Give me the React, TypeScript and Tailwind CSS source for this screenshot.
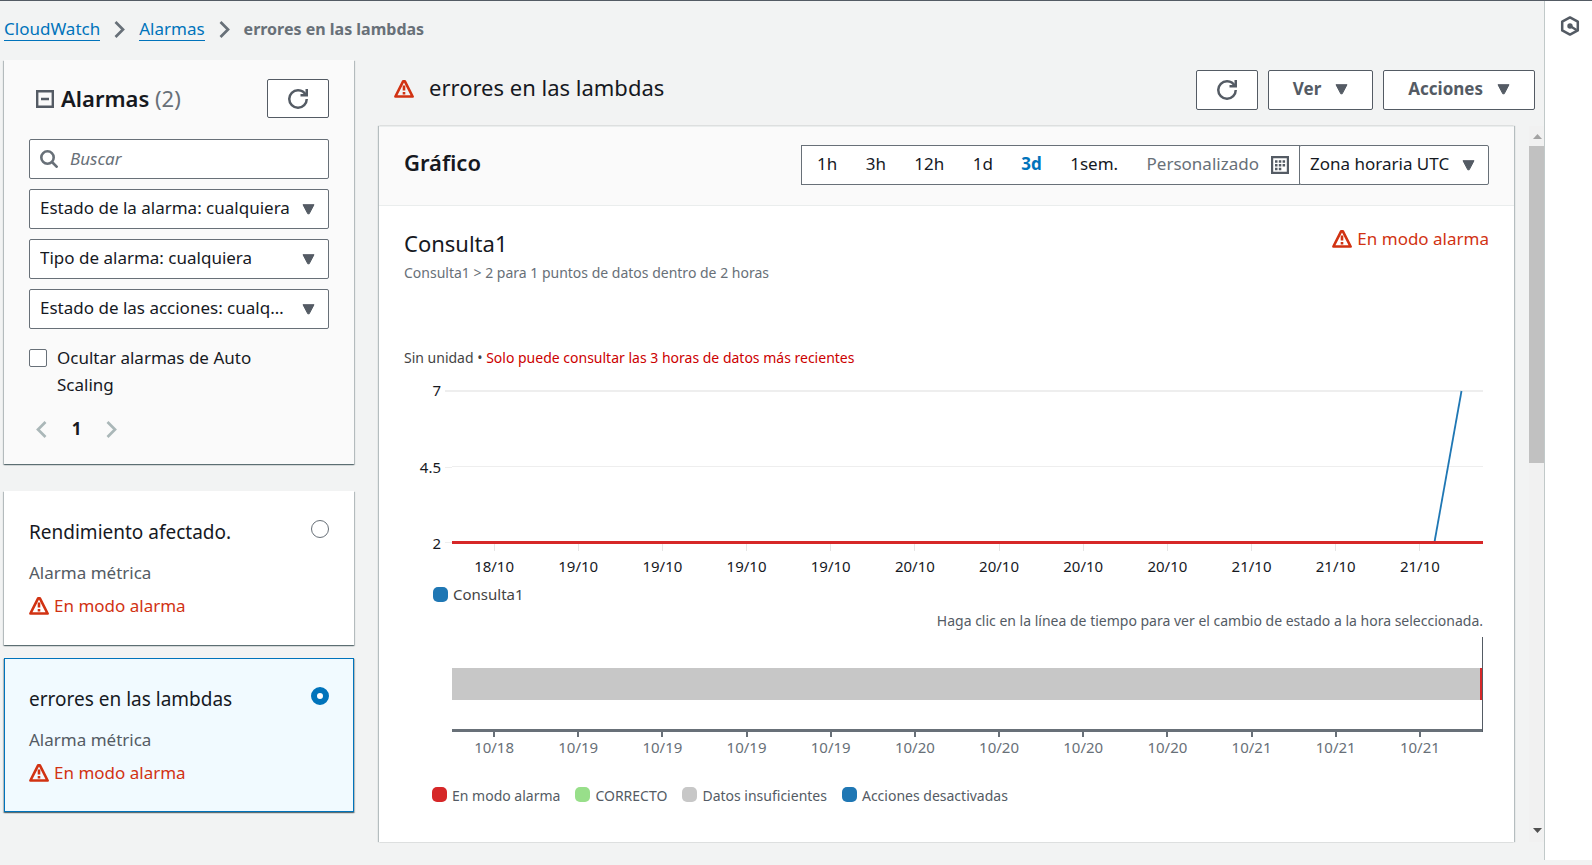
import { useState } from "react";
import type { ReactNode } from "react";

const RANGES = ["1h", "3h", "12h", "1d", "3d", "1sem."];
const CHART_DATES = ["18/10", "19/10", "19/10", "19/10", "19/10", "20/10", "20/10", "20/10", "20/10", "21/10", "21/10", "21/10"];
const TIMELINE_DATES = ["10/18", "10/19", "10/19", "10/19", "10/19", "10/20", "10/20", "10/20", "10/20", "10/21", "10/21", "10/21"];
const ALARMS = ["Rendimiento afectado.", "errores en las lambdas"];
const STATES = [
  { label: "En modo alarma", color: "bg-[#d62728]" },
  { label: "CORRECTO", color: "bg-[#98df8a]" },
  { label: "Datos insuficientes", color: "bg-[#c7c7c7]" },
  { label: "Acciones desactivadas", color: "bg-[#1f77b4]" },
];

function RefreshIcon() {
  return (
    <svg viewBox="0 0 16 16" className="size-5" fill="none" stroke="currentColor" strokeWidth="2" aria-hidden="true">
      <path d="M10 5h5V0" />
      <path d="M15 8a6.96 6.96 0 0 1-7 7 6.96 6.96 0 0 1-7-7 6.96 6.96 0 0 1 7-7 6.87 6.87 0 0 1 6.3 4" />
    </svg>
  );
}

function WarningIcon() {
  return (
    <svg viewBox="0 0 20 20" className="size-5 shrink-0" fill="none" stroke="currentColor" strokeWidth="2.600" aria-hidden="true">
      <path d="M9.100 2.300h1.800l7.700 15.200H1.400Z" strokeLinejoin="round" />
      <path d="M10 6.500v5M10 13v2.500" />
    </svg>
  );
}

function Caret({ className = "" }: { className?: string }) {
  return (
    <svg viewBox="0 0 13 11" className={`h-[11px] w-[13px] shrink-0 ${className}`} aria-hidden="true">
      <path d="M1 .7h11L7.200 9.800H5.800Z" fill="#545b64" stroke="#545b64" strokeLinejoin="round" />
    </svg>
  );
}

function Chevron({ left = false, className = "" }: { left?: boolean; className?: string }) {
  return (
    <svg viewBox="0 0 11 17" className={`h-[17px] w-[11px] ${className}`} fill="none" stroke="currentColor" strokeWidth="2.700" aria-hidden="true">
      <path d={left ? "M9.500 1 2 8.500l7.500 7.500" : "M1.500 1 9 8.500 1.500 16"} />
    </svg>
  );
}

function Button({ children, label, className = "" }: { children: ReactNode; label?: string; className?: string }) {
  return (
    <button
      type="button"
      aria-label={label}
      className={`flex items-center justify-center rounded-[2px] border border-[#545b64] bg-white font-bold text-[#545b64] ${className}`}
    >
      {children}
    </button>
  );
}

function Select({ text, label, className = "" }: { text: string; label: string; className?: string }) {
  return (
    <div className={`relative ${className}`}>
      <select
        aria-label={label}
        className="block h-10 w-full appearance-none truncate rounded-[2px] border border-[#687078] bg-white pr-[38px] pb-[2px] pl-[10px] text-[#16191f]"
      >
        <option>{text}</option>
      </select>
      <Caret className="pointer-events-none absolute top-[15px] right-[14px]" />
    </div>
  );
}

function AlarmState() {
  return (
    <span className="flex items-center gap-[5px] leading-6 text-[#d13212]">
      <WarningIcon />
      En modo alarma
    </span>
  );
}

function Sidebar() {
  const [selected, setSelected] = useState(1);
  return (
    <aside className="flex w-[350px] shrink-0 flex-col">
      <section className="bg-[#fafafa] px-[25px] pt-[19px] pb-[21px] shadow-[0_1px_1px_0_rgba(0,28,36,0.4),1px_1px_1px_0_rgba(0,28,36,0.2),-1px_1px_1px_0_rgba(0,28,36,0.2)]">
        <div className="flex h-[39px] items-center">
          <svg viewBox="0 0 18 18" className="mr-[7px] ml-[7px] size-[18px]" fill="none" stroke="#545b64" strokeWidth="2.400" aria-hidden="true">
            <path d="M1.200 1.200h15.600v15.600H1.200ZM5 9h8" />
          </svg>
          <h2 className="text-[22px] font-semibold text-[#16191f]">
            Alarmas <span className="font-normal text-[#687078]">(2)</span>
          </h2>
          <Button label="Actualizar alarmas" className="ml-auto h-[39px] w-[62px]">
            <RefreshIcon />
          </Button>
        </div>
        <div className="mt-[21px] flex flex-col gap-[10px]">
          <div className="relative">
            <svg viewBox="0 0 18 18" className="absolute top-[11px] left-[11px] size-[18px]" fill="none" stroke="#687078" strokeWidth="2.600" aria-hidden="true">
              <circle cx="7.500" cy="7.500" r="6.200" />
              <path d="m12 12 5.500 5.500" />
            </svg>
            <input
              type="search"
              aria-label="Buscar"
              placeholder="Buscar"
              className="block h-10 w-full rounded-[2px] border border-[#687078] bg-white pr-3 pb-[2px] pl-10 placeholder:text-[#687078] placeholder:italic"
            />
          </div>
          <Select label="Estado de la alarma" text="Estado de la alarma: cualquiera" />
          <Select label="Tipo de alarma" text="Tipo de alarma: cualquiera" />
          <Select label="Estado de las acciones" text="Estado de las acciones: cualquiera" />
        </div>
        <label className="mt-[15px] flex items-start gap-[10px] leading-[27px]">
          <input
            type="checkbox"
            className="mt-[5px] size-[18px] shrink-0 appearance-none rounded-[2px] border border-[#687078] bg-white checked:bg-[#0073bb]"
          />
          <span className="w-[220px]">Ocultar alarmas de Auto Scaling</span>
        </label>
        <nav aria-label="Paginación" className="mt-[17px] flex h-[28px] items-center pl-[7px]">
          <button type="button" aria-label="Página anterior" className="text-[#aab7b8]">
            <Chevron left />
          </button>
          <span className="w-[59px] text-center font-bold">1</span>
          <button type="button" aria-label="Página siguiente" className="text-[#aab7b8]">
            <Chevron />
          </button>
        </nav>
      </section>
      <div className="mt-[27px] flex flex-col gap-[13px]">
        {ALARMS.map((name, i) => (
          <label
            key={name}
            className={`flex min-h-[154px] justify-between border px-6 pt-6 shadow-[0_1px_1px_0_rgba(0,28,36,0.4),1px_1px_1px_0_rgba(0,28,36,0.2),-1px_1px_1px_0_rgba(0,28,36,0.2)] ${
              selected === i ? "border-[#0073bb] bg-[#f1faff]" : "border-white bg-white"
            }`}
          >
            <span className="flex flex-col">
              <span className="text-[19px] leading-8">{name}</span>
              <span className="mt-[13px] leading-6 text-[#545b64]">Alarma métrica</span>
              <span className="mt-[9px]">
                <AlarmState />
              </span>
            </span>
            <input
              type="radio"
              name="alarm"
              checked={selected === i}
              onChange={() => setSelected(i)}
              className="mt-[4px] size-[18px] appearance-none rounded-full border border-[#687078] bg-white checked:border-[6px] checked:border-[#0073bb]"
            />
          </label>
        ))}
      </div>
    </aside>
  );
}

function MetricChart() {
  return (
    <div className="mt-[22px]">
      <div className="flex">
        <div className="-my-[10px] flex w-[37px] flex-col justify-between text-right text-[15px] leading-5 text-[#16191f]">
          <span>7</span>
          <span>4.5</span>
          <span>2</span>
        </div>
        <div className="ml-1 flex h-[153px] min-w-0 flex-1">
          <div className="flex w-[7px] shrink-0 flex-col justify-between">
            <i className="h-[2px] bg-[#eee]" />
            <i className="h-px bg-[#eee]" />
            <i className="h-px bg-[#eee]" />
          </div>
          <svg viewBox="0 0 1031 153" preserveAspectRatio="none" className="h-[153px] min-w-0 flex-1 overflow-visible" role="img" aria-label="Consulta1">
            <path d="M0 1h1031" stroke="#eee" strokeWidth="2" />
            <path d="M0 76.500h1031" stroke="#eee" />
            <path d="m982.500 152 27-151" stroke="#1f77b4" strokeWidth="1.800" fill="none" />
            <path d="M0 152.500h1031" stroke="#d62728" strokeWidth="3" />
          </svg>
        </div>
      </div>
      <div className="mr-[21px] ml-12 grid grid-cols-12">
        {CHART_DATES.map((date, i) => (
          <div key={i} className="flex flex-col items-center text-[15px] leading-5 text-[#16191f]">
            <i className="mt-px mb-[5px] h-[7px] w-px bg-[#e5e5e5]" />
            {date}
          </div>
        ))}
      </div>
      <div className="mt-[8px] ml-[29px] flex items-center gap-[5px] text-[15px] leading-5 text-[#444]">
        <i className="size-[15px] rounded-[5px] bg-[#1f77b4]" />
        Consulta1
      </div>
    </div>
  );
}

function StateTimeline() {
  return (
    <div className="mt-[7px]">
      <p className="text-right text-[14px] leading-5 text-[#545b64]">
        Haga clic en la línea de tiempo para ver el cambio de estado a la hora seleccionada.
      </p>
      <div className="mt-[6px] ml-12 border-r border-[#545b64]">
        <div className="flex h-[92px] items-center pt-[2px]">
          <div className="h-8 flex-1 border-r-2 border-[#d62728] bg-[#c7c7c7]" />
        </div>
        <div className="h-[3px] bg-[#687078]" />
      </div>
      <div className="mr-[21px] ml-12 grid grid-cols-12">
        {TIMELINE_DATES.map((date, i) => (
          <div key={i} className="flex flex-col items-center text-[15px] leading-5 text-[#687078]">
            <i className="h-[5px] w-[2px] bg-[#687078]" />
            {date}
          </div>
        ))}
      </div>
      <ul className="mt-[29px] ml-7 flex gap-[15px] text-[14px] leading-5 text-[#545b64]">
        {STATES.map((state) => (
          <li key={state.label} className="flex gap-[5px]">
            <i className={`mt-px size-[15px] rounded-[5px] ${state.color}`} />
            {state.label}
          </li>
        ))}
      </ul>
    </div>
  );
}

function GraphPanel() {
  const [range, setRange] = useState("3d");
  return (
    <section className="min-w-0 flex-1 bg-white shadow-[1px_0_1px_0_rgba(0,28,36,0.25),-1px_0_1px_0_rgba(0,28,36,0.25)]">
      <header className="flex h-20 items-center justify-between border-t border-b border-[#eaeded] bg-[#fafafa] px-[25px] pb-[2px]">
        <h2 className="pb-[5px] text-[22px] font-semibold text-[#16191f]">Gráfico</h2>
        <div className="flex">
          <div className="flex h-10 w-[499px] items-center justify-between border border-[#687078] bg-white pr-[10px] pb-[2px] pl-[15px]">
            {RANGES.map((item) => (
              <button
                key={item}
                type="button"
                onClick={() => setRange(item)}
                className={range === item ? "font-bold text-[#0073bb]" : "text-[#16191f]"}
              >
                {item}
              </button>
            ))}
            <button type="button" className="flex items-center gap-3 text-[#687078]">
              Personalizado
              <svg viewBox="0 0 18 18" className="mt-[2px] size-[18px]" aria-hidden="true">
                <path d="M1.100 1.100h15.800v15.800H1.100Z" fill="none" stroke="#545b64" strokeWidth="2.200" />
                <path
                  d="M4 4.200h2.500v2.500H4zM7.800 4.200h2.500v2.500H7.800zM11.600 4.200h2.500v2.500h-2.500zM4 8h2.500v2.500H4zM7.800 8h2.500v2.500H7.800zM11.600 8h2.500v2.500h-2.500zM4 11.700h2.500v2.500H4zM7.800 11.700h2.500v2.500H7.800z"
                  fill="#545b64"
                />
              </svg>
            </button>
          </div>
          <Select label="Zona horaria" text="Zona horaria UTC" className="-ml-px w-[190px]" />
        </div>
      </header>
      <div className="px-[25px] pt-[21px]">
        <div className="flex items-start justify-between">
          <div>
            <h3 className="text-[22px] leading-8 text-[#16191f]">Consulta1</h3>
            <p className="mt-1 text-[14px] leading-5 text-[#687078]">Consulta1 &gt; 2 para 1 puntos de datos dentro de 2 horas</p>
          </div>
          <AlarmState />
        </div>
        <p className="mt-[65px] text-[14px] leading-5 text-[#444]">
          Sin unidad • <span className="text-[#c00]">Solo puede consultar las 3 horas de datos más recientes</span>
        </p>
        <div className="mr-[6px]">
          <MetricChart />
          <StateTimeline />
        </div>
      </div>
    </section>
  );
}

function ScrollTrack() {
  return (
    <div aria-hidden="true" className="flex w-[15px] shrink-0 flex-col items-center bg-[#f1f1f1]">
      <svg viewBox="0 0 16 20" className="h-5 w-4">
        <path d="M4 13h9L8.500 8Z" fill="#a3a3a3" />
      </svg>
      <div className="h-[317px] w-full bg-[#c1c1c1]" />
      <svg viewBox="0 0 16 20" className="mt-auto h-5 w-4">
        <path d="M4 6h9l-4.500 5Z" fill="#505050" />
      </svg>
    </div>
  );
}

export default function App() {
  return (
    <div className="flex min-h-screen border-t border-[#545b64] bg-[#f2f3f3] font-['Noto_Sans','Open_Sans',sans-serif] text-[17px] text-[#16191f]">
      <div className="flex min-w-0 flex-1 flex-col pl-1">
        <nav aria-label="Ruta" className="flex h-[59px] items-center pb-[3px]">
          <a href="#cloudwatch" className="border-b border-[#0073bb] leading-[22px] text-[#0073bb]">CloudWatch</a>
          <Chevron className="mx-[14px] text-[#687078]" />
          <a href="#alarmas" className="border-b border-[#0073bb] leading-[22px] text-[#0073bb]">Alarmas</a>
          <Chevron className="mx-[14px] text-[#687078]" />
          <span className="text-[16px] font-bold text-[#687078]">errores en las lambdas</span>
        </nav>
        <div className="flex flex-1">
          <Sidebar />
          <main className="ml-[25px] flex min-w-0 flex-1 flex-col pb-[23px]">
            <div className="flex h-[66px] items-start gap-[10px] pt-[10px] pr-[9px] pl-[15px]">
              <div className="flex h-[38px] items-center gap-[15px] text-[#d13212]">
                <WarningIcon />
                <h1 className="pb-[3px] text-[22px] text-[#16191f]">errores en las lambdas</h1>
              </div>
              <Button label="Actualizar" className="ml-auto h-10 w-[62px]">
                <RefreshIcon />
              </Button>
              <Button className="h-10 gap-[14px] px-6 pb-[2px]">
                Ver <Caret />
              </Button>
              <Button className="h-10 gap-[14px] px-6 pb-[2px]">
                Acciones <Caret />
              </Button>
            </div>
            <div className="flex flex-1">
              <GraphPanel />
              <div className="w-[15px] shrink-0" />
              <ScrollTrack />
            </div>
          </main>
        </div>
      </div>
      <aside className="mb-[5px] flex w-12 shrink-0 justify-center border-l border-[#c1c9c9] bg-white pt-[15px] pl-[2px]">
        <button type="button" aria-label="Diagnóstico" className="h-5">
          <svg viewBox="0 0 20 20" className="size-5" fill="none" stroke="#545b64" strokeWidth="2.500" aria-hidden="true">
            <path d="M10 1.400 17.800 5.600v8.800L10 18.600 2.200 14.400V5.600Z" strokeLinejoin="round" />
            <path d="m10 10 6.500 4" />
            <circle cx="10" cy="10" r="2.700" fill="#545b64" stroke="none" />
          </svg>
        </button>
      </aside>
    </div>
  );
}
